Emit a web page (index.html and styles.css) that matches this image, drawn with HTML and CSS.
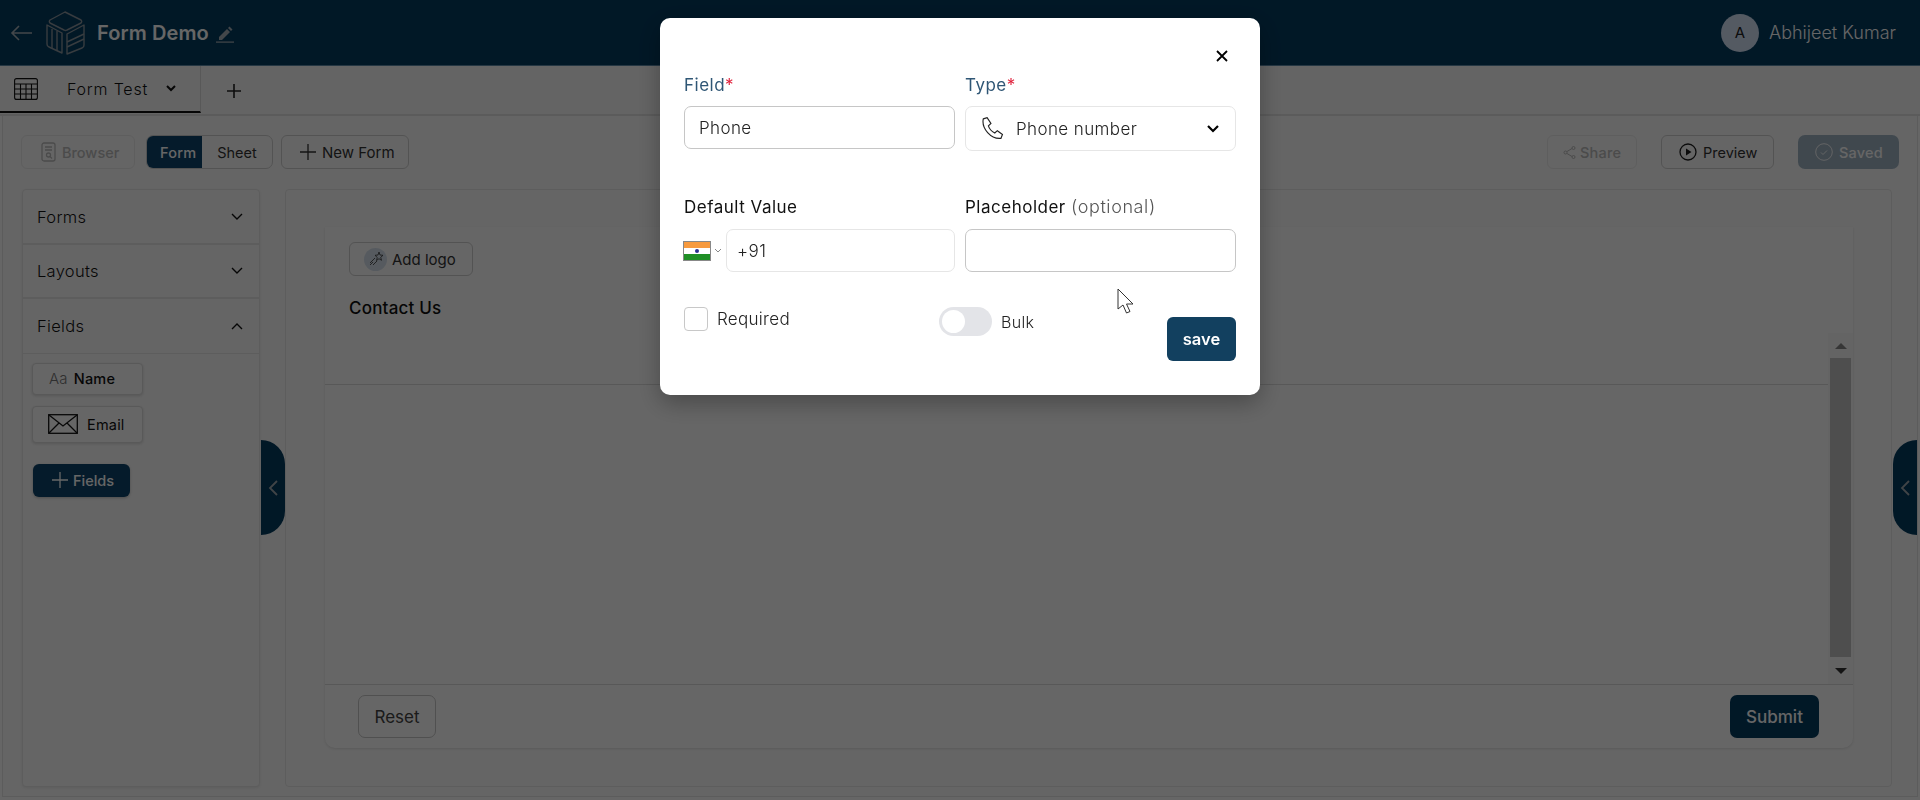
FILE: index.html
```html
<!doctype html>
<html lang="en">
<head>
	<meta charset="UTF-8">
	<title>Form Demo</title>
	<link rel="stylesheet" href="styles.css">
</head>
<body>
<div class="app">
	<header class="topbar">
		<svg class="back_icon" width="24" height="16" viewBox="0 0 24 16" fill="none" stroke="#a9b1b8" stroke-width="1.6"><path d="M22 8H2M9 1L2 8l7 7"/></svg>
		<svg class="cube_icon" width="40" height="44" viewBox="0 0 40 44" fill="none" stroke="#8c979f" stroke-width="1.4" stroke-linejoin="round"><path d="M19 1L35 9a2 2 0 0 1 0 3L21 19a3 3 0 0 1-3 0L4 12a2 2 0 0 1 0-3z"/><path d="M1 14l15 8v20L3 36a3 3 0 0 1-2-3z"/><path d="M6 18v19M11 20v20"/><path d="M38 14v20a3 3 0 0 1-2 3l-15 6V23z"/><path d="M21 31l17-8M21 36l17-8"/></svg>
		<span class="app_name">Form Demo</span>
		<svg class="edit_icon" width="18" height="18" viewBox="0 0 18 18" fill="#a9b1b8"><path d="M3 12L11 4l3 3-8 8H3zM12 3l1.500-1.500 3 3L15 6z"/><rect y="16.500" width="18" height="1.200"/></svg>
		<div class="user">
			<span class="avatar">A</span>
			<span class="user_name">Abhijeet Kumar</span>
		</div>
	</header>

	<nav class="tabs">
		<div class="tab">
			<svg width="24" height="22" viewBox="0 0 24 22" fill="none" stroke="#111" stroke-width="1.100"><rect x=".6" y=".6" width="22.800" height="20.800" rx="2"/><path d="M1 6h22M1 11h22M1 16h22M6.500 6v15M12 6v15M17.500 6v15"/></svg>
			<span class="tab_name">Form Test</span>
			<svg width="10" height="7" viewBox="0 0 10 7" fill="none" stroke="#111" stroke-width="2"><path d="M1 1l4 4 4-4"/></svg>
		</div>
		<svg class="tab_add" width="16" height="16" viewBox="0 0 16 16" stroke="#222" stroke-width="1.600"><path d="M8 1v14M1 8h14"/></svg>
	</nav>

	<main class="workspace">
		<div class="toolbar">
			<button class="btn btn_faded btn_browser">
				<svg width="15" height="20" viewBox="0 0 15 20" fill="none" stroke="currentColor" stroke-width="1.300"><rect x="1" y="1" width="13" height="18" rx="2"/><path d="M4 5h7M4 8h7"/><circle cx="7.500" cy="13" r="2"/><path d="M9 14.500l2 2"/></svg>
				Browser
			</button>
			<div class="switcher">
				<span class="switch_on">Form</span>
				<span class="switch_off">Sheet</span>
			</div>
			<button class="btn btn_new">
				<svg width="16" height="16" viewBox="0 0 16 16" stroke="currentColor" stroke-width="1.300"><path d="M8 0v16M0 8h16"/></svg>
				New Form
			</button>
			<div class="toolbar_right">
				<button class="btn btn_faded btn_share">
					<svg width="13" height="13" viewBox="0 0 13 13" fill="none" stroke="currentColor"><circle cx="2.500" cy="6.500" r="1.500"/><circle cx="10.500" cy="2" r="1.500"/><circle cx="10.500" cy="11" r="1.500"/><path d="M4 5.500l5-3M4 7.500l5 3"/></svg>
					Share
				</button>
				<button class="btn btn_preview">
					<svg width="18" height="18" viewBox="0 0 18 18" fill="none" stroke="#1c1c1c" stroke-width="1.300"><circle cx="9" cy="9" r="8"/><path d="M7 5.500l5.500 3.500L7 12.500z" fill="#1c1c1c" stroke="none"/></svg>
					Preview
				</button>
				<button class="btn btn_saved">
					<svg width="18" height="18" viewBox="0 0 18 18" fill="none" stroke="currentColor" stroke-width=".9"><circle cx="9" cy="9" r="8.300"/><path d="M6 9.500l2 2 4-4"/></svg>
					Saved
				</button>
			</div>
		</div>

		<div class="columns">
			<aside class="sidebar">
				<div class="acc_row"><span>Forms</span><svg width="12" height="8" viewBox="0 0 12 8" fill="none" stroke="#111" stroke-width="1.400"><path d="M1 1l5 5 5-5"/></svg></div>
				<div class="acc_row"><span>Layouts</span><svg width="12" height="8" viewBox="0 0 12 8" fill="none" stroke="#111" stroke-width="1.400"><path d="M1 1l5 5 5-5"/></svg></div>
				<div class="acc_row acc_open"><span>Fields</span><svg width="12" height="8" viewBox="0 0 12 8" fill="none" stroke="#111" stroke-width="1.400"><path d="M1 7l5-5 5 5"/></svg></div>
				<div class="acc_body">
					<div class="chip chip_name"><span class="aa">Aa</span><span>Name</span></div>
					<div class="chip chip_email">
						<svg width="30" height="20" viewBox="0 0 30 20" fill="none" stroke="#161616" stroke-width="1.300"><rect x=".7" y=".7" width="28.600" height="18.600"/><path d="M1 1l14 11L29 1M1 19l10-10M29 19L19 9"/></svg>
						<span>Email</span>
					</div>
					<button class="add_field">
						<svg width="16" height="16" viewBox="0 0 16 16" stroke="currentColor" stroke-width="1.300"><path d="M8 0v16M0 8h16"/></svg>
						Fields
					</button>
				</div>
			</aside>

			<button class="drawer drawer_left"><svg width="10" height="16" viewBox="0 0 10 16" fill="none" stroke="#a2aab0" stroke-width="1.800"><path d="M9 1L2 8l7 7"/></svg></button>

			<section class="canvas">
				<div class="form_card">
					<div class="form_head">
						<button class="btn btn_logo">
							<span class="logo_badge">
								<svg width="16" height="16" viewBox="0 0 16 16" fill="none" stroke="#333" stroke-width=".8"><path d="M11 1l1 3 3 .3-2.300 2 .8 3-2.500-1.600L8.500 9.500l.8-3L7 4.300 10 4zM7 7l-5 5M5 11l-3 3M9 10l-4 4"/></svg>
							</span>
							Add logo
						</button>
						<h2 class="form_title">Contact Us</h2>
					</div>
					<div class="form_body">
						<div class="scroll">
							<div class="scroll_btn"><i class="arrow_up"></i></div>
							<div class="scroll_thumb"></div>
							<div class="scroll_btn"><i class="arrow_down"></i></div>
						</div>
					</div>
					<div class="form_foot">
						<button class="btn_reset">Reset</button>
						<button class="btn_submit">Submit</button>
					</div>
				</div>
			</section>

			<button class="drawer drawer_right"><svg width="10" height="16" viewBox="0 0 10 16" fill="none" stroke="#a2aab0" stroke-width="1.800"><path d="M9 1L2 8l7 7"/></svg></button>
		</div>
	</main>
</div>

<div class="overlay"></div>

<div class="modal">
	<div class="modal_close">
		<svg width="12" height="12" viewBox="0 0 12 12" stroke="#000" stroke-width="1.800"><path d="M1 1l10 10M11 1L1 11"/></svg>
	</div>
	<div class="modal_grid">
		<div class="field">
			<label class="label label_blue">Field<em>*</em></label>
			<div class="input input_strong">Phone</div>
		</div>
		<div class="field">
			<label class="label label_blue">Type<em>*</em></label>
			<div class="input select">
				<svg width="23" height="23" viewBox="2 1 18 18" fill="none" stroke="#222" stroke-width=".9"><path d="M3 2.500l3-1 3 4.500-2 2c.8 2.500 2.500 4.300 5 5.500l2-1.800 4 3-1.200 3C9 18.500 1.500 10 3 2.500z"/></svg>
				<span>Phone number</span>
				<svg class="select_arrow" width="12" height="8" viewBox="0 0 12 8" fill="none" stroke="#000" stroke-width="2.200"><path d="M1 1l5 5 5-5"/></svg>
			</div>
		</div>
		<div class="field">
			<label class="label">Default Value</label>
			<div class="phone_row">
				<div class="flag_pick">
					<svg width="28" height="20" viewBox="0 0 28 20"><rect width="28" height="20" fill="#888"/><rect x="1" y="1" width="26" height="6" fill="#f79a3e"/><rect x="1" y="7" width="26" height="6" fill="#fff"/><rect x="1" y="13" width="26" height="6" fill="#1f8f26"/><circle cx="14" cy="10" r="2" fill="#2a2f8f"/></svg>
					<svg width="8" height="5" viewBox="0 0 8 5" fill="none" stroke="#888"><path d="M1 1l3 3 3-3"/></svg>
				</div>
				<div class="input phone_input">+91</div>
			</div>
		</div>
		<div class="field">
			<label class="label">Placeholder <span class="optional">(optional)</span></label>
			<div class="input input_strong"></div>
		</div>
	</div>
	<div class="modal_foot">
		<div class="required">
			<span class="checkbox"></span>
			<span>Required</span>
		</div>
		<div class="bulk">
			<span class="toggle"><i></i></span>
			<span>Bulk</span>
		</div>
		<button class="btn_save">save</button>
	</div>
</div>

<svg class="cursor" width="18" height="27" viewBox="0 0 18 27" fill="#fff" stroke="#333" stroke-width="1"><path d="M1 1v20l5-4 3.500 8 3.500-1.500-3.500-7.500H16z"/></svg>
</body>
</html>
```

FILE: styles.css
```css
*{box-sizing: border-box;}
html,body{margin: 0;height: 100%;overflow: hidden;}
body{font-family: "Inter","Open Sans","Liberation Sans",sans-serif;color: #222;background: #fff;}
button{font-family: inherit;cursor: pointer;}

.app{height: 800px;display: flex;flex-direction: column;}

/* top bar */
.topbar{height: 67px;background: #043c60;display: flex;align-items: center;padding-left: 10px;padding-right: 24px;border-bottom: 1px solid #5d89a8;}
.back_icon{margin-right: 12px;}
.cube_icon{margin-right: 11px;}
.app_name{font-size: 20px;font-weight: 600;color: #fff;margin-right: 7px;letter-spacing: .1px;}
.edit_icon{margin-top: 2px;}
.user{margin-left: auto;display: flex;align-items: center;gap: 10px;}
.avatar{width: 38px;height: 38px;border-radius: 50%;background: #d1e0f5;color: #222;display: flex;align-items: center;justify-content: center;font-size: 15px;}
.user_name{font-size: 18px;font-weight: 300;color: #fff;}

/* tabs */
.tabs{height: 50px;background: #fafafa;display: flex;align-items: flex-start;border-bottom: 2px solid #e4e4e4;}
.tab{width: 201px;height: 47px;display: flex;align-items: center;padding-left: 14px;border-bottom: 2px solid #111;border-right: 1px solid #ddd;}
.tab_name{font-size: 16px;font-weight: 300;color: #111;margin-left: 29px;margin-right: 18px;letter-spacing: .8px;}
.tab_add{margin: 17px 0 0 25px;}

/* workspace */
.workspace{flex: 1;margin: 0 2px 3px;border: 1px solid #e6e6e6;border-top: 0;display: flex;flex-direction: column;background: #fdfdfd;}
.toolbar{height: 73px;display: flex;align-items: flex-start;padding: 19px 18px 0 18px;}
.toolbar_right{margin-left: auto;display: flex;gap: 24px;}
.btn{height: 34px;border: 1px solid #d0d0d0;border-radius: 6px;background: transparent;display: flex;align-items: center;font-size: 14.500px;color: #333;padding: 0;}
.btn_faded{border-color: #ececec;color: #bbb;font-weight: 500;}
.btn_browser{width: 114px;padding-left: 19px;gap: 6px;}
.switcher{display: flex;margin-left: 11px;width: 127px;height: 34px;border: 1px solid #d0d0d0;border-radius: 7px;overflow: hidden;font-size: 14.500px;}
.switch_on{width: 56px;margin: -1px 0 -1px -1px;background: #0d456c;color: #fff;display: flex;align-items: center;padding-left: 14px;font-weight: 500;letter-spacing: .2px;}
.switch_off{flex: 1;display: flex;align-items: center;justify-content: center;color: #333;}
.btn_new{width: 128px;margin-left: 8px;padding-left: 18px;gap: 6px;font-size: 15px;}
.btn_share{width: 90px;padding-left: 15px;gap: 4px;letter-spacing: .2px;}
.btn_preview{width: 113px;padding-left: 17px;gap: 6px;}
.btn_saved{width: 101px;padding-left: 17px;gap: 6px;background: #a1b4c4;border: 0;border-radius: 7px;color: #fff;font-weight: 500;letter-spacing: .2px;}

.columns{flex: 1;display: flex;align-items: stretch;padding: 0 0 9px 19px;}

/* sidebar */
.sidebar{width: 238px;border: 1px solid #e8e8e8;border-radius: 4px;background: #fdfdfd;box-shadow: 0 1px 3px rgba(0,0,0,.08);}
.acc_row{height: 54.500px;padding: 0 16px 0 14px;display: flex;align-items: center;justify-content: space-between;font-size: 16.500px;font-weight: 300;color: #111;border-bottom: 2px solid #e8e8e8;letter-spacing: .3px;}
.acc_row:first-child{padding-top: 1px;}
.acc_open{border-bottom-width: 1px;}
.acc_body{padding: 9px 9px;}
.chip{width: 111px;border: 1px solid #dedede;border-radius: 4px;box-shadow: 0 1px 3px rgba(0,0,0,.15);display: flex;align-items: center;font-size: 14.500px;color: #111;background: #fff;}
.chip_name{height: 32px;padding-left: 16px;gap: 6px;margin-bottom: 11px;font-weight: 500;letter-spacing: .2px;}
.aa{font-size: 15px;font-weight: 300;color: #777;}
.chip_email{height: 37px;padding-left: 15px;gap: 9px;letter-spacing: .2px;}
.add_field{margin: 21px 0 0 1px;width: 97px;height: 33px;border: 0;border-radius: 6px;background: #0d456c;color: #fff;display: flex;align-items: center;padding-left: 19px;gap: 5px;font-size: 14.500px;font-weight: 500;box-shadow: 0 1px 3px rgba(0,0,0,.25);}

.drawer{width: 24px;height: 95px;padding: 0;border: 0;background: #043c60;display: flex;align-items: center;justify-content: center;margin-top: 251px;flex: none;}
.drawer_left{border-radius: 0 24px 24px 0;margin-left: 1px;}
.drawer_right{border-radius: 24px 0 0 24px;margin-left: 1px;padding-top: 0;}

/* canvas */
.canvas{width: 1607px;flex: none;border: 1px solid #e8e8e8;border-radius: 4px;padding: 37px 38px 38px 39px;}
.form_card{width: 1528px;height: 521px;border-radius: 0 0 10px 10px;background: #fff;box-shadow: 0 1px 3px rgba(0,0,0,.12);display: flex;flex-direction: column;}
.form_head{height: 158px;padding: 15px 24px;border-bottom: 1px solid #ddd;}
.btn_logo{width: 124px;padding-left: 14px;gap: 5px;font-size: 15px;}
.logo_badge{width: 23px;height: 23px;border-radius: 50%;background: #d7e2ee;display: flex;align-items: center;justify-content: center;}
.form_title{margin: 22px 0 0;font-size: 17px;font-weight: 500;color: #111;letter-spacing: .2px;}
.form_body{height: 299px;display: flex;justify-content: flex-end;}
.scroll{width: 25px;display: flex;flex-direction: column;background: #fafafa;margin-top: -52px;position: relative;}
.scroll_btn{height: 25px;display: flex;align-items: center;justify-content: center;}
.scroll_btn:last-child{height: 27px;}
.scroll_thumb{flex: 1;background: #c2c2c2;margin: 0 2px;}
.arrow_up{border: 6px solid transparent;border-top: 0;border-bottom: 6px solid #888;}
.arrow_down{border: 6px solid transparent;border-bottom: 0;border-top: 6px solid #333;}
.form_foot{flex: 1;border-top: 1px solid #ddd;padding: 10px 34px 0 33px;display: flex;justify-content: space-between;align-items: flex-start;}
.btn_reset{width: 78px;height: 43px;border: 1px solid #c8c8c8;border-radius: 7px;background: transparent;font-size: 17px;color: #444;}
.btn_submit{width: 89px;height: 43px;border: 0;border-radius: 7px;background: #043c60;color: #fff;font-size: 17px;font-weight: 500;}

/* dim layer + dialog */
.overlay{position: fixed;inset: 0;background: rgba(0,0,0,.6);}
.modal{position: fixed;left: 660px;top: 18px;width: 600px;height: 377px;background: #fff;border-radius: 10px;padding: 0 24px;box-shadow: 0 8px 24px rgba(0,0,0,.3);}
.modal_close{display: flex;justify-content: flex-end;padding: 32px 8px 0 0;height: 55px;}
.modal_grid{display: grid;grid-template-columns: 271px 271px;column-gap: 10px;}
.field{height: 123px;}
.label{display: block;height: 33px;font-size: 17px;line-height: 22px;font-weight: 400;color: #111;letter-spacing: .5px;}
.label_blue{color: #2f5675;padding-top: 1px;}
.label em{font-style: normal;color: #e0213c;}
.optional{font-size: 18px;font-weight: 300;color: #555;letter-spacing: .6px;}
.input{height: 43px;border: 1px solid #e6e6e6;border-radius: 7px;display: flex;align-items: center;padding-left: 14px;font-size: 17px;font-weight: 300;color: #222;letter-spacing: .4px;}
.input_strong{border-color: #c6c6c6;}
.select{height: 45px;padding-left: 16px;gap: 11px;}
.select_arrow{margin-left: auto;margin-right: 16px;}
.phone_row{display: flex;align-items: center;}
.flag_pick{width: 42px;flex: none;display: flex;align-items: center;gap: 3px;margin-left: -1px;}
.phone_input{flex: 1;margin-left: 1px;padding-left: 10px;}
.modal_foot{display: flex;align-items: flex-start;height: 60px;margin-top: -12px;font-size: 17px;font-weight: 300;color: #222;letter-spacing: .3px;}
.required{display: flex;align-items: center;gap: 9px;width: 255px;}
.checkbox{width: 24px;height: 24px;border: 1px solid #c8c8c8;border-radius: 4px;}
.bulk{display: flex;align-items: center;gap: 9px;margin-top: 0;font-size: 16px;}
.toggle{width: 53px;height: 29px;border-radius: 15px;background: #e3e4e8;padding: 3px;display: block;}
.toggle i{display: block;width: 23px;height: 23px;border-radius: 50%;background: #fff;}
.btn_save{margin-left: auto;margin-top: 10px;width: 69px;height: 44px;border: 0;border-radius: 6px;background: #12405f;color: #fff;font-size: 16.500px;font-weight: 600;}
.cursor{position: fixed;left: 1117px;top: 288px;}
```
